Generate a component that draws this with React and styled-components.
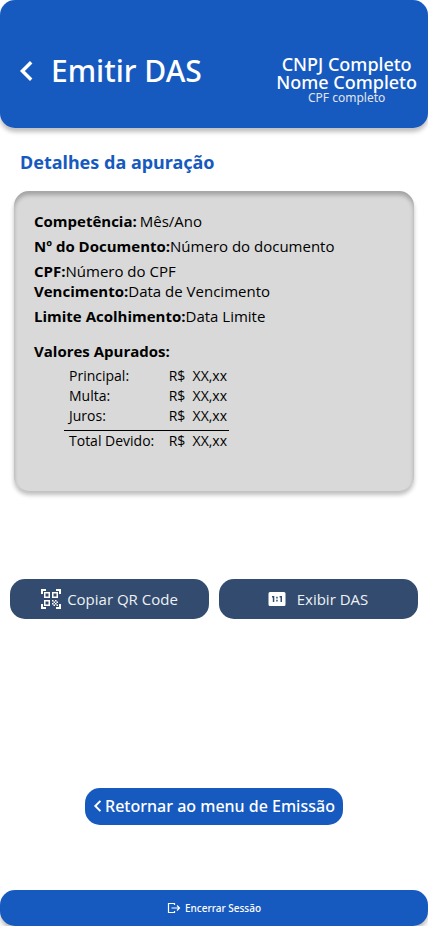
import React from "react";
import styled, { createGlobalStyle } from "styled-components";
import { MdQrCodeScanner } from "react-icons/md";

const GlobalStyle = createGlobalStyle`
  *, *::before, *::after { box-sizing: border-box; }
  body {
    margin: 0;
    background: #fff;
    color: #000;
    font-family: "Noto Sans", "Open Sans", sans-serif;
  }
  h1, h2, h3, p, dl, dd { margin: 0; }
  button { font-family: inherit; border: 0; cursor: pointer; }
  svg { display: block; flex: none; }
`;

const Page = styled.div`
  display: flex;
  flex-direction: column;
  min-height: 100vh;
`;

const Header = styled.header`
  display: flex;
  align-items: flex-end;
  justify-content: space-between;
  height: 128px;
  padding: 0 11px 23px 15px;
  border-radius: 15px;
  background: #175abf;
  color: #fff;
  box-shadow: 0 4px 4px rgba(0, 0, 0, 0.25);
`;

const TitleGroup = styled.div`
  display: flex;
  align-items: center;
  gap: 12px;
  margin-bottom: 13px;
`;

const BackButton = styled.button`
  padding: 0;
  background: none;
  color: inherit;
`;

const Title = styled.h1`
  font-size: 30px;
  line-height: 42px;
  font-weight: 500;
`;

const Account = styled.div`
  text-align: center;
  font-size: 18px;
  line-height: 18px;
  font-weight: 500;
`;

const AccountId = styled.p`
  font-size: 12px;
  line-height: 14px;
  font-weight: 400;
  color: #e2e5ea;
`;

const Main = styled.main`
  display: flex;
  flex: 1;
  flex-direction: column;
`;

const SectionTitle = styled.h2`
  margin: 22px 20px 16px;
  color: #175abf;
  font-size: 18px;
  line-height: 25px;
  font-weight: 700;
`;

const Card = styled.section`
  min-height: 300px;
  margin: 0 14px;
  padding: 20px 20px 38px;
  border-radius: 15px;
  background: #d9d9d9;
  font-family: "Open Sans", "Noto Sans", sans-serif;
  box-shadow: 0 4px 4px rgba(0, 0, 0, 0.25), inset 0 4px 4px rgba(0, 0, 0, 0.25);
`;

const Detail = styled.div`
  display: flex;
  gap: ${(p) => (p.$spaced ? "3px" : "0")};
  margin-bottom: ${(p) => (p.$tight ? "0" : "5px")};
  font-size: 15px;
  line-height: 20px;

  dt { font-weight: 700; }
  dd { font-weight: 400; }
`;

const AmountsTitle = styled.h3`
  margin: 13px 0 2px;
  font-size: 15px;
  line-height: 25px;
  font-weight: 700;
`;

const Amounts = styled.table`
  width: 165px;
  margin-left: 30px;
  border-collapse: collapse;
  font-size: 14px;
  line-height: 20px;

  th, td { padding: 0; font-weight: 400; white-space: pre; }
  th { padding-left: 5px; text-align: left; }
  td { padding-right: 2px; text-align: right; }
  tbody tr:last-child > * { padding-bottom: 4px; }
  tfoot { border-top: 1px solid #000; }
`;

const Actions = styled.div`
  display: grid;
  grid-template-columns: 1fr 1fr;
  gap: 10px;
  margin: 88px 10px 0;
`;

const ActionButton = styled.button`
  display: flex;
  align-items: center;
  justify-content: center;
  gap: ${(p) => p.$gap};
  height: 40px;
  padding: 0 2px 0 0;
  border-radius: 15px;
  background: #324b6e;
  color: #eef1f5;
  font-family: "Open Sans", "Noto Sans", sans-serif;
  font-size: 15px;
  line-height: 20px;
  font-weight: 400;

  svg { color: #fff; }
`;

const ReturnButton = styled.button`
  display: flex;
  align-items: center;
  align-self: center;
  gap: 0;
  height: 37px;
  margin: auto 0 65px;
  padding: 0 8px 2px 6px;
  border-radius: 15px;
  background: #175abf;
  color: #fff;
  font-size: 16px;
  line-height: 22px;
  font-weight: 500;
`;

const LogoutButton = styled.button`
  display: flex;
  align-items: center;
  justify-content: center;
  gap: 4px;
  height: 36px;
  border-radius: 15px;
  background: #175abf;
  color: #fff;
  font-size: 10px;
  line-height: 14px;
  font-weight: 500;
  box-shadow: 0 4px 4px rgba(0, 0, 0, 0.25);
`;

const ChevronIcon = ({ size }) => (
  <svg width={size} height={size} viewBox="0 0 24 24" fill="none" stroke="currentColor" strokeWidth="3.4" aria-hidden="true">
    <path d="M16.200 3.200 7.400 12l8.800 8.800" />
  </svg>
);

const RatioIcon = () => (
  <svg width="20" height="20" viewBox="0 0 20 20" aria-hidden="true">
    <path
      fill="currentColor"
      fillRule="evenodd"
      d="M3 3h14A1.500 1.500 0 0 1 18.500 4.500v11A1.500 1.500 0 0 1 17 17H3A1.500 1.500 0 0 1 1.500 15.500V4.500A1.500 1.500 0 0 1 3 3ZM5 7v1.500h.8V13h1.500V7ZM9.200 7.800v1.600h1.500V7.800ZM9.200 10.800v1.600h1.500v-1.600ZM12.600 7v1.500h.9V13H15V7Z"
    />
  </svg>
);

const LogoutIcon = () => (
  <svg width="14" height="14" viewBox="0 0 14 14" fill="none" stroke="currentColor" strokeWidth="1.2" aria-hidden="true">
    <path d="M7.500 4V2.500h-6v9h6V10M4.500 7h8M10 4.500 12.500 7 10 9.500" />
  </svg>
);

const details = [
  { label: "Competência:", value: "Mês/Ano", spaced: true },
  { label: "Nº do Documento:", value: "Número do documento" },
  { label: "CPF:", value: "Número do CPF", tight: true },
  { label: "Vencimento:", value: "Data de Vencimento" },
  { label: "Limite Acolhimento:", value: "Data Limite" },
];

const amounts = ["Principal:", "Multa:", "Juros:"];

export default function App() {
  return (
    <>
      <GlobalStyle />
      <Page>
        <Header>
          <TitleGroup>
            <BackButton type="button" aria-label="Voltar">
              <ChevronIcon size={24} />
            </BackButton>
            <Title>Emitir DAS</Title>
          </TitleGroup>
          <Account>
            <p>CNPJ Completo</p>
            <p>Nome Completo</p>
            <AccountId>CPF completo</AccountId>
          </Account>
        </Header>

        <Main>
          <SectionTitle>Detalhes da apuração</SectionTitle>
          <Card>
            <dl>
              {details.map((d) => (
                <Detail key={d.label} $spaced={d.spaced} $tight={d.tight}>
                  <dt>{d.label}</dt>
                  <dd>{d.value}</dd>
                </Detail>
              ))}
            </dl>
            <AmountsTitle id="valores">Valores Apurados:</AmountsTitle>
            <Amounts aria-labelledby="valores">
              <tbody>
                {amounts.map((label) => (
                  <tr key={label}>
                    <th scope="row">{label}</th>
                    <td>{"R$  XX,xx"}</td>
                  </tr>
                ))}
              </tbody>
              <tfoot>
                <tr>
                  <th scope="row">Total Devido:</th>
                  <td>{"R$  XX,xx"}</td>
                </tr>
              </tfoot>
            </Amounts>
          </Card>

          <Actions>
            <ActionButton type="button" $gap="4px">
              <MdQrCodeScanner size={24} />
              Copiar QR Code
            </ActionButton>
            <ActionButton type="button" $gap="10px">
              <RatioIcon />
              Exibir DAS
            </ActionButton>
          </Actions>

          <ReturnButton type="button">
            <ChevronIcon size={14} />
            Retornar ao menu de Emissão
          </ReturnButton>
        </Main>

        <LogoutButton type="button">
          <LogoutIcon />
          Encerrar Sessão
        </LogoutButton>
      </Page>
    </>
  );
}
